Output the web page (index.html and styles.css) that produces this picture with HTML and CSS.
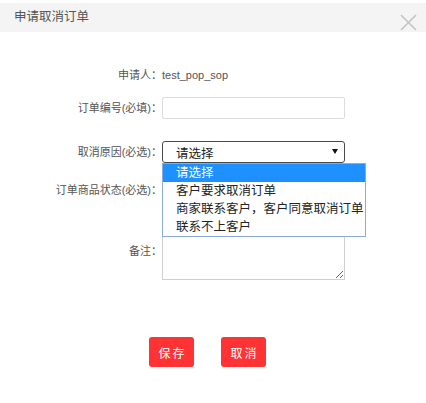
FILE: index.html
```html
<!DOCTYPE html>
<html lang="zh-CN">
<head>
    <meta charset="UTF-8">
    <title>申请取消订单</title>
    <link rel="stylesheet" href="styles.css">
</head>
<body>
    <div class="dialog">
        <div class="dialog-header">
            <span class="dialog-title">申请取消订单</span>
            <svg class="dialog-close" width="17" height="17" viewBox="0 0 17 17">
                <path d="M1 1 L16 16 M16 1 L1 16" stroke="#c4c4c4" stroke-width="1.6" fill="none"/>
            </svg>
        </div>

        <div class="form">
            <div class="form-row row-applicant">
                <label class="form-label">申请人：</label>
                <span class="form-value">test_pop_sop</span>
            </div>

            <div class="form-row row-order">
                <label class="form-label">订单编号(必填)：</label>
                <input class="form-input" type="text">
            </div>

            <div class="form-row row-reason">
                <label class="form-label">取消原因(必选)：</label>
                <div class="select-wrap">
                    <div class="select">
                        <span>请选择</span>
                        <svg class="select-arrow" width="6" height="5" viewBox="0 0 6 5">
                            <path d="M0 0 L6 0 L3 5 Z" fill="#111"/>
                        </svg>
                    </div>
                    <ul class="select-menu">
                        <li class="active">请选择</li>
                        <li>客户要求取消订单</li>
                        <li>商家联系客户，客户同意取消订单</li>
                        <li>联系不上客户</li>
                    </ul>
                </div>
            </div>

            <div class="form-row row-status">
                <label class="form-label">订单商品状态(必选)：</label>
            </div>

            <div class="form-row row-remark">
                <label class="form-label">备注：</label>
                <textarea class="form-textarea"></textarea>
            </div>
        </div>

        <div class="actions">
            <button class="btn">保存</button>
            <button class="btn">取消</button>
        </div>
    </div>
</body>
</html>
```

FILE: styles.css
```css
body {
    margin: 0;
    background: #fff;
    font-family: "Liberation Sans", "Noto Sans CJK SC", sans-serif;
    color: #555;
}

.dialog-header {
    margin-top: 3px;
    height: 29px;
    background: #f4f4f4;
    display: flex;
    justify-content: space-between;
    align-items: flex-start;
    padding: 0 9px 0 14px;
}

.dialog-title {
    font-size: 12.5px;
    line-height: 29px;
    color: #555;
}

.dialog-close {
    margin-top: 11px;
}

.form-row {
    display: flex;
    align-items: center;
}

/* centered full-width colon, like YaHei */
.form-label {
    width: 162px;
    flex-shrink: 0;
    text-align: right;
    font-family: "Liberation Sans", "Noto Sans CJK TC", sans-serif;
    font-size: 11px;
    line-height: 20px;
    color: #555;
}

.form-value {
    font-size: 11px;
    line-height: 20px;
    color: #555;
}

.row-applicant {
    margin-top: 33px;
}

.row-order {
    margin-top: 12px;
}

.row-reason {
    margin-top: 22px;
}

.row-status {
    margin-top: 17px;
}

.row-remark {
    margin-top: 31px;
    align-items: flex-start;
}

.row-remark .form-label {
    margin-top: 10px;
}

.form-input {
    box-sizing: border-box;
    width: 183px;
    height: 22px;
    margin: 0;
    border: 1px solid #dcdcdc;
    border-radius: 2px;
    outline: none;
}

.select-wrap {
    position: relative;
}

.select {
    box-sizing: border-box;
    width: 183px;
    height: 22px;
    border: 1px solid #4a4a4a;
    border-radius: 3px;
    display: flex;
    align-items: center;
    justify-content: space-between;
    padding: 0 6px 0 13px;
    font-size: 12.5px;
    color: #222;
}

.select-arrow {
    margin-top: -2px;
}

.select-menu {
    position: absolute;
    top: 22px;
    left: 0;
    width: 204px;
    box-sizing: border-box;
    margin: 0;
    padding: 0;
    list-style: none;
    background: #fff;
    border: 1px solid #8eaadb;
    z-index: 2;
}

.select-menu li {
    height: 18px;
    line-height: 18px;
    padding-left: 13px;
    font-size: 12.5px;
    color: #222;
    white-space: nowrap;
}

.select-menu li.active {
    background: #1e90ff;
    color: #fff;
}

.form-textarea {
    box-sizing: border-box;
    width: 183px;
    height: 49px;
    margin: 0;
    border: 1px solid #cfcfcf;
    resize: both;
}

.actions {
    display: flex;
    gap: 27px;
    padding-left: 149px;
    margin-top: 57px;
}

.btn {
    width: 45px;
    height: 30px;
    border: none;
    border-radius: 3px;
    background: #ff3333;
    color: #fff;
    font-family: "Liberation Sans", "Noto Sans CJK SC", sans-serif;
    font-size: 12px;
    letter-spacing: 2px;
    padding: 0 0 0 2px;
}
```
